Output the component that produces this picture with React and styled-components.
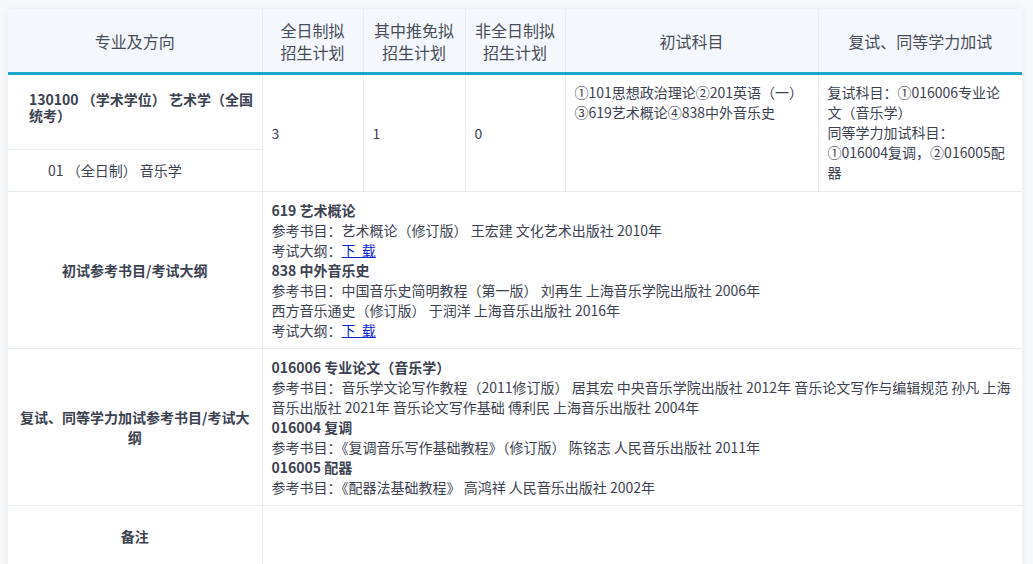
import React from "react";
import styled, { createGlobalStyle } from "styled-components";

const Global = createGlobalStyle`
  html, body { margin: 0; padding: 0; background: #f7f8fa; }
  body { font-family: "Noto Sans CJK SC", "Noto Sans", sans-serif; color: #3c4250; }
`;

const Page = styled.div`
  padding: 9px 11px 0 8px;
`;

const Table = styled.table`
  width: 1014px;
  table-layout: fixed;
  border-collapse: collapse;
  background: #ffffff;
  box-shadow: 0 0 8px rgba(30, 40, 60, 0.07);
  font-size: 14px;
  line-height: 20px;
`;

const HeadCell = styled.th`
  height: 63px;
  padding: 0 4px;
  background: #f4f7fc;
  border-left: 1px solid #e8ecf1;
  border-bottom: 3px solid #1ba6c9;
  font-size: 16px;
  line-height: 22px;
  font-weight: normal;
  color: #474d58;
  text-align: center;
  vertical-align: middle;
  &:first-child { border-left: none; }
`;

const Cell = styled.td`
  padding: ${(p) =>
    p.$tight ? "7px 16px 9px 9px" : p.$wide ? "8px 9px 8px 9px" : "8px 16px 8px 9px"};
  border: 1px solid #e8ecf1;
  vertical-align: ${(p) => (p.$middle ? "middle" : "top")};
  color: #3c4250;
  &:first-child { border-left: none; }
  &:last-child { border-right: none; }
`;

const MajorCell = styled.td`
  height: 57px;
  padding: 16px 8px 0 21px;
  border: 1px solid #e8ecf1;
  border-left: none;
  vertical-align: top;
  font-weight: bold;
  line-height: 16px;
  color: #3c4250;
`;

const DirectionCell = styled.td`
  height: 41px;
  padding: 0 8px 0 40px;
  border: 1px solid #e8ecf1;
  border-left: none;
  vertical-align: middle;
  color: #3c4250;
`;

const LabelCell = styled.td`
  height: ${(p) => p.$h || "auto"};
  padding: 8px 10px;
  border: 1px solid #e8ecf1;
  border-left: none;
  text-align: center;
  vertical-align: middle;
  font-weight: bold;
  color: #3c4250;
`;

const Title = styled.div`
  font-weight: bold;
`;

const Line = styled.div``;

const Link = styled.a`
  color: #0b24d6;
  text-decoration: underline;
`;

export default function App() {
  return (
    <Page>
      <Global />
      <Table>
        <colgroup>
          <col style={{ width: 254 }} />
          <col style={{ width: 101 }} />
          <col style={{ width: 102 }} />
          <col style={{ width: 100 }} />
          <col style={{ width: 253 }} />
          <col style={{ width: 204 }} />
        </colgroup>
        <thead>
          <tr>
            <HeadCell>专业及方向</HeadCell>
            <HeadCell>全日制拟<br />招生计划</HeadCell>
            <HeadCell>其中推免拟<br />招生计划</HeadCell>
            <HeadCell>非全日制拟<br />招生计划</HeadCell>
            <HeadCell>初试科目</HeadCell>
            <HeadCell>复试、同等学力加试</HeadCell>
          </tr>
        </thead>
        <tbody>
          <tr>
            <MajorCell>130100 （学术学位） 艺术学（全国统考）</MajorCell>
            <Cell rowSpan={2} $middle>3</Cell>
            <Cell rowSpan={2} $middle>1</Cell>
            <Cell rowSpan={2} $middle>0</Cell>
            <Cell rowSpan={2} $tight>①101思想政治理论②201英语（一）③619艺术概论④838中外音乐史</Cell>
            <Cell rowSpan={2} $tight>
              <Line>复试科目：①016006专业论文（音乐学）</Line>
              <Line>同等学力加试科目：①016004复调，②016005配器</Line>
            </Cell>
          </tr>
          <tr>
            <DirectionCell>01 （全日制） 音乐学</DirectionCell>
          </tr>
          <tr>
            <LabelCell>初试参考书目/考试大纲</LabelCell>
            <Cell colSpan={5} $wide>
              <Title>619 艺术概论</Title>
              <Line>参考书目：艺术概论（修订版） 王宏建 文化艺术出版社 2010年</Line>
              <Line>考试大纲：<Link href="#">下&nbsp;&nbsp;载</Link></Line>
              <Title>838 中外音乐史</Title>
              <Line>参考书目：中国音乐史简明教程（第一版） 刘再生 上海音乐学院出版社 2006年</Line>
              <Line>西方音乐通史（修订版） 于润洋 上海音乐出版社 2016年</Line>
              <Line>考试大纲：<Link href="#">下&nbsp;&nbsp;载</Link></Line>
            </Cell>
          </tr>
          <tr>
            <LabelCell>复试、同等学力加试参考书目/考试大纲</LabelCell>
            <Cell colSpan={5} $wide>
              <Title>016006 专业论文（音乐学）</Title>
              <Line>参考书目：音乐学文论写作教程（2011修订版） 居其宏 中央音乐学院出版社 2012年 音乐论文写作与编辑规范 孙凡 上海音乐出版社 2021年 音乐论文写作基础 傅利民 上海音乐出版社 2004年</Line>
              <Title>016004 复调</Title>
              <Line>参考书目：《复调音乐写作基础教程》（修订版） 陈铭志 人民音乐出版社 2011年</Line>
              <Title>016005 配器</Title>
              <Line>参考书目：《配器法基础教程》 高鸿祥 人民音乐出版社 2002年</Line>
            </Cell>
          </tr>
          <tr>
            <LabelCell $h="44px">备注</LabelCell>
            <Cell colSpan={5}></Cell>
          </tr>
        </tbody>
      </Table>
    </Page>
  );
}
